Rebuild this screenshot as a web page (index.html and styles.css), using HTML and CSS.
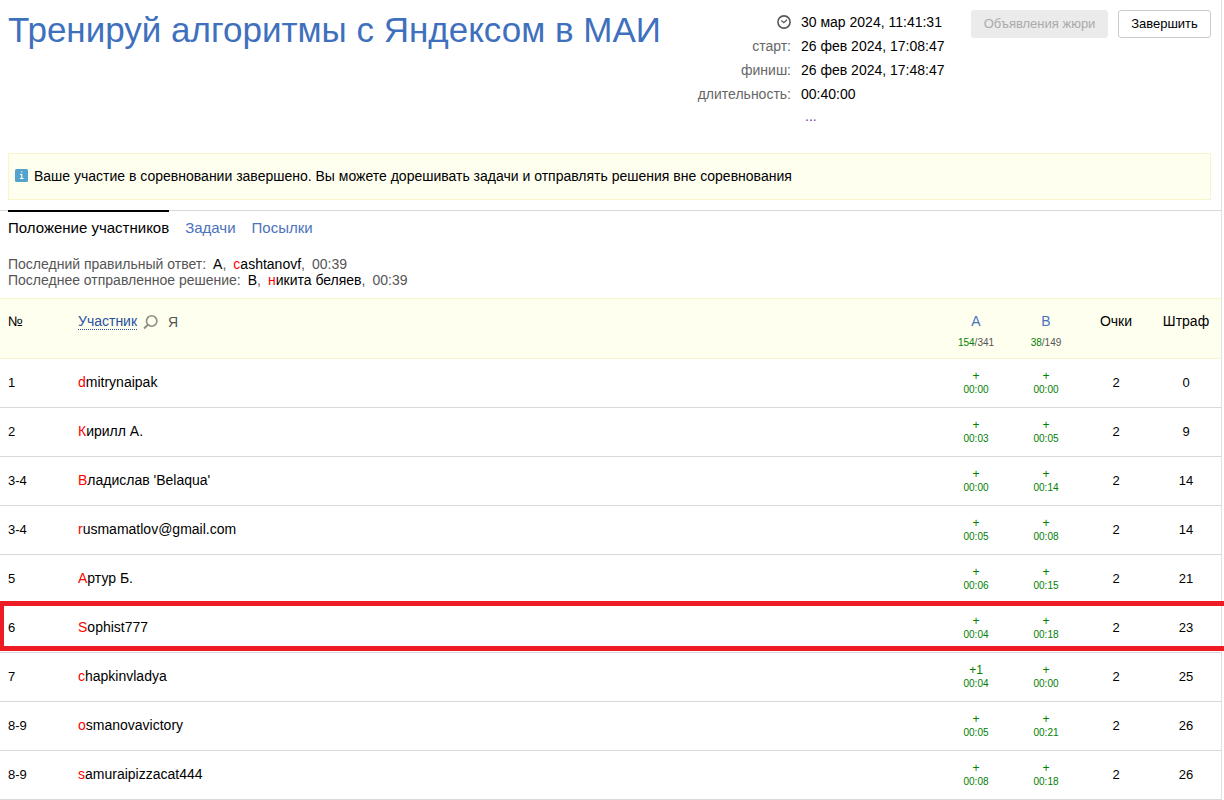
FILE: index.html
```
<!DOCTYPE html>
<html lang="ru">
<head>
<meta charset="utf-8">
<title>Тренируй алгоритмы с Яндексом в МАИ</title>
<link rel="stylesheet" href="styles.css">
</head>
<body>
<div class="page">
  <header class="header">
    <h1 class="title">Тренируй алгоритмы с Яндексом в МАИ</h1>
    <div class="times">
      <span class="label"><svg class="clock" width="14" height="14" viewBox="0 0 14 14" fill="none" stroke="#55585c"><circle cx="7" cy="7" r="6.1" stroke-width="1.6"/><path d="M4.3 5.5 6.8 7.7 10 4.7" stroke-width="1.2"/></svg></span><span class="value">30 мар 2024, 11:41:31</span>
      <span class="label">старт:</span><span class="value">26 фев 2024, 17:08:47</span>
      <span class="label">финиш:</span><span class="value">26 фев 2024, 17:48:47</span>
      <span class="label">длительность:</span><span class="value">00:40:00</span>
      <span></span><span class="more">...</span>
    </div>
    <div class="actions">
      <button class="button button-disabled" disabled>Объявления жюри</button>
      <button class="button button-finish">Завершить</button>
    </div>
  </header>

  <div class="notice">
    <svg class="info" width="13" height="13" viewBox="0 0 13 13"><rect width="13" height="13" rx="1.5" fill="#55a2cb"/><path d="M6 3h1.3M5 5.5h1.8v4M4.8 9.5h3.8" fill="none" stroke="#fff" stroke-width="1.1"/></svg>
    <span class="notice-text">Ваше участие в соревновании завершено. Вы можете дорешивать задачи и отправлять решения вне соревнования</span>
  </div>

  <nav class="tabs">
    <a class="tab tab-active">Положение участников</a>
    <a class="tab">Задачи</a>
    <a class="tab">Посылки</a>
  </nav>

  <div class="last">
    <div class="last-line"><span>Последний правильный ответ:</span><span><b>A</b>,</span><span><b class="user">cashtanovf</b>,</span><span>00:39</span></div>
    <div class="last-line"><span>Последнее отправленное решение:</span><span><b>B</b>,</span><span><b class="user">никита беляев</b>,</span><span>00:39</span></div>
  </div>

  <div class="table">
    <div class="row head">
      <span class="num">№</span>
      <span class="who"><a class="sort">Участник</a><svg class="search" width="15" height="15" viewBox="0 0 15 15" fill="none" stroke="#8d8d83"><circle cx="8.7" cy="6" r="5.2" stroke-width="1.6"/><path d="M4.9 9.7 1 13.4" stroke-width="2"/></svg><span class="me">Я</span></span>
      <span class="task"><a class="letter">A</a><span class="stat"><i>154</i>/341</span></span>
      <span class="task"><a class="letter">B</a><span class="stat"><i>38</i>/149</span></span>
      <span class="col">Очки</span>
      <span class="col">Штраф</span>
    </div>
    <div class="row"><span class="num">1</span><span class="user">dmitrynaipak</span><span class="res">+<small>00:00</small></span><span class="res">+<small>00:00</small></span><span class="score">2</span><span class="score">0</span></div>
    <div class="row"><span class="num">2</span><span class="user">Кирилл А.</span><span class="res">+<small>00:03</small></span><span class="res">+<small>00:05</small></span><span class="score">2</span><span class="score">9</span></div>
    <div class="row"><span class="num">3-4</span><span class="user">Владислав 'Belaqua'</span><span class="res">+<small>00:00</small></span><span class="res">+<small>00:14</small></span><span class="score">2</span><span class="score">14</span></div>
    <div class="row"><span class="num">3-4</span><span class="user">rusmamatlov@gmail.com</span><span class="res">+<small>00:05</small></span><span class="res">+<small>00:08</small></span><span class="score">2</span><span class="score">14</span></div>
    <div class="row"><span class="num">5</span><span class="user">Артур Б.</span><span class="res">+<small>00:06</small></span><span class="res">+<small>00:15</small></span><span class="score">2</span><span class="score">21</span></div>
    <div class="row marked"><span class="num">6</span><span class="user">Sophist777</span><span class="res">+<small>00:04</small></span><span class="res">+<small>00:18</small></span><span class="score">2</span><span class="score">23</span></div>
    <div class="row"><span class="num">7</span><span class="user">chapkinvladya</span><span class="res">+1<small>00:04</small></span><span class="res">+<small>00:00</small></span><span class="score">2</span><span class="score">25</span></div>
    <div class="row"><span class="num">8-9</span><span class="user">osmanovavictory</span><span class="res">+<small>00:05</small></span><span class="res">+<small>00:21</small></span><span class="score">2</span><span class="score">26</span></div>
    <div class="row"><span class="num">8-9</span><span class="user">samuraipizzacat444</span><span class="res">+<small>00:08</small></span><span class="res">+<small>00:18</small></span><span class="score">2</span><span class="score">26</span></div>
  </div>
</div>
</body>
</html>
```
FILE: styles.css
```
*, *::after { box-sizing: border-box; }
body {
  margin: 0;
  background: #fff;
  color: #000;
  font: 14px/16px "Liberation Sans", Arial, sans-serif;
  overflow: hidden;
}
.page { width: 1222px; height: 800px; border-right: 1px solid #e0e0e0; }

.header { display: flex; height: 153px; padding: 10px 10px 0 8px; }
.title { flex: 0 0 689px; margin: 0; font-size: 35px; line-height: 40px; font-weight: 400; color: #3f70bd; white-space: nowrap; }
.times {
  display: grid;
  flex: none;
  grid-template-columns: 94px 150px;
  grid-auto-rows: 24px;
  column-gap: 10px;
  align-content: start;
  line-height: 24px;
  white-space: nowrap;
}
.label { text-align: right; color: #666; }
.clock { display: block; margin: 5px 0 0 auto; }
.more { padding-left: 4px; color: #7a3fa0; line-height: 20px; }
.actions { display: flex; gap: 10px; align-items: flex-start; margin-left: auto; }
.button {
  height: 28px;
  padding: 0;
  border: 1px solid #ccc;
  border-radius: 3px;
  background: #fff;
  color: #000;
  font: 13px/26px "Liberation Sans", Arial, sans-serif;
  white-space: nowrap;
}
.button-disabled { width: 137px; border-color: #ebebeb; background: #ebebeb; color: #aaa; }
.button-finish { width: 93px; }

.notice {
  display: flex;
  align-items: center;
  gap: 6px;
  height: 47px;
  margin: 0 10px 10px 8px;
  padding: 0 0 2px 6px;
  border: 1px solid #f9f4cc;
  background: #fffff0;
}

.tabs { display: flex; gap: 16px; height: 46px; padding-left: 8px; border-top: 1px solid #d9d9d9; font-size: 15px; }
.tab { padding-top: 9px; color: #4a72bd; white-space: nowrap; }
.tab-active { height: 20px; margin-top: -1px; padding-top: 8px; border-top: 2px solid #000; color: #000; }

.last { height: 42px; padding-left: 8px; color: #555; white-space: nowrap; }
.last-line { display: flex; gap: 7px; }
.last b { font-weight: 400; color: #000; }
.user::first-letter { color: #f00; }
.last b.user { display: inline-block; }

.row {
  position: relative;
  display: grid;
  grid-template-columns: 70px 863px repeat(4, 70px);
  align-items: center;
  height: 49px;
  padding-left: 8px;
  border-bottom: 1px solid #d9d9d9;
}
.num { font-size: 13px; }
.row > .user { padding-bottom: 2px; }
.head { align-items: start; height: 61px; padding-top: 14px; border-top: 1px solid #faf3cc; border-bottom-color: #faf3cc; background: #fffff0; }
.head .num { font-size: 14px; }
.who { display: flex; align-items: flex-start; }
.sort { color: #2850a0; border-bottom: 1px dotted #2850a0; }
.search { margin: 2px 0 0 6px; }
.me { margin: 1px 0 0 10px; color: #555; }
.task, .res { display: flex; flex-direction: column; align-items: center; }
.letter { color: #4a72bd; }
.stat { margin-top: 8px; font-size: 10px; line-height: 12px; color: #555; }
.stat i { font-style: normal; color: #008000; }
.col, .score { text-align: center; }
.score { font-size: 13px; }
.res { font-size: 12px; line-height: 14px; color: #008000; }
.res small { font-size: 10px; line-height: 14px; }
.marked::after {
  content: "";
  position: absolute;
  top: -3px;
  left: -1px;
  width: 1225px;
  height: 50px;
  border: 5px solid #ed1c24;
  border-right: 0;
}
```
